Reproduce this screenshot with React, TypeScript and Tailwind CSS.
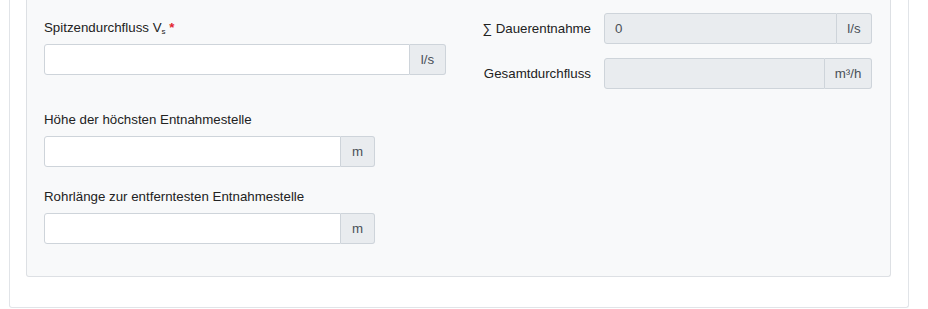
import React from "react";

const font = { fontFamily: '"Liberation Sans", Arial, sans-serif' };

function UnitInput({ width, unitWidth, unit, value, disabled }: {
  width: string;
  unitWidth: string;
  unit: React.ReactNode;
  value?: string;
  disabled?: boolean;
}) {
  return (
    <div className={`flex h-[31px] ${width}`}>
      <div
        className={`flex-1 flex items-center px-[10px] border border-[#ced4da] rounded-l-[3px] text-[13.3px] text-[#495057] ${
          disabled ? "bg-[#e9ecef]" : "bg-white"
        }`}
      >
        {value}
      </div>
      <div
        className={`${unitWidth} flex items-center justify-center border border-l-0 border-[#ced4da] rounded-r-[3px] bg-[#e9ecef] text-[13.3px] text-[#495057]`}
      >
        {unit}
      </div>
    </div>
  );
}

function Label({ children }: { children: React.ReactNode }) {
  return <div className="text-[13.3px] leading-[20px] text-[#222] mb-[6px]">{children}</div>;
}

export default function App() {
  return (
    <div style={font} className="w-[928px] h-[309px] overflow-hidden bg-white pl-[9px] pr-[19px]">
      <div className="border border-t-0 border-[#e1e4e8] rounded-b-[3px] pl-4 pr-[17px] pb-[30px]">
        <div className="border border-t-0 border-[#dde0e4] rounded-b-[3px] bg-[#f8f9fa] pl-[17px] pr-[18px] pt-[13px] pb-[32px] flex">
          <div className="w-[416px] pt-[5px]">
            <Label>
              Spitzendurchfluss V<sub className="text-[8px]">s</sub>{" "}
              <span className="text-[#e3262f] font-bold">*</span>
            </Label>
            <UnitInput width="w-[402px]" unitWidth="w-[36px]" unit="l/s" />

            <div className="mt-[35px]">
              <Label>Höhe der höchsten Entnahmestelle</Label>
              <UnitInput width="w-[331px]" unitWidth="w-[34px]" unit="m" />
            </div>

            <div className="mt-[20px]">
              <Label>Rohrlänge zur entferntesten Entnahmestelle</Label>
              <UnitInput width="w-[331px]" unitWidth="w-[34px]" unit="m" />
            </div>
          </div>

          <div className="flex-1 flex flex-col gap-[14px]">
            <div className="flex items-center">
              <div className="flex-1 text-right pr-[13px] text-[13.3px] text-[#222]">∑ Dauerentnahme</div>
              <UnitInput width="w-[268px]" unitWidth="w-[35px]" unit="l/s" value="0" disabled />
            </div>
            <div className="flex items-center">
              <div className="flex-1 text-right pr-[13px] text-[13.3px] text-[#222]">Gesamtdurchfluss</div>
              <UnitInput
                width="w-[268px]"
                unitWidth="w-[47px]"
                unit={<span>m³/h</span>}
                disabled
              />
            </div>
          </div>
        </div>
      </div>
    </div>
  );
}
